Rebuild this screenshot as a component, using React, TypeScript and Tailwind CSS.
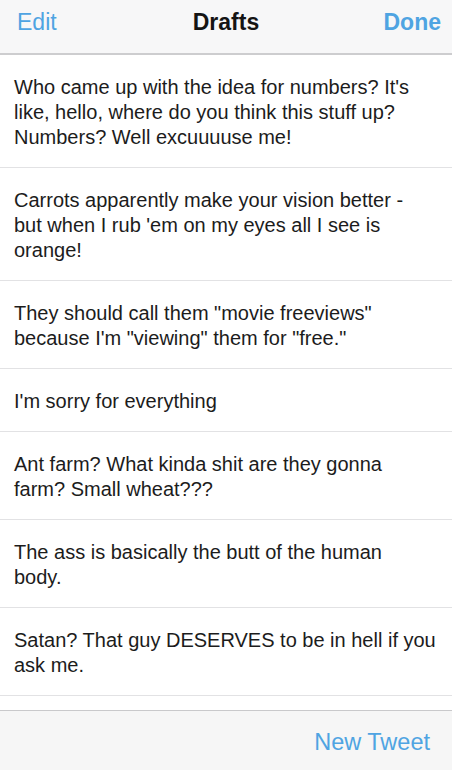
import React from "react";

const drafts: string[][] = [
  [
    "Who came up with the idea for numbers? It's",
    "like, hello, where do you think this stuff up?",
    "Numbers? Well excuuuuse me!",
  ],
  [
    "Carrots apparently make your vision better -",
    "but when I rub 'em on my eyes all I see is",
    "orange!",
  ],
  [
    'They should call them "movie freeviews"',
    'because I\'m "viewing" them for "free."',
  ],
  ["I'm sorry for everything"],
  ["Ant farm? What kinda shit are they gonna", "farm? Small wheat???"],
  ["The ass is basically the butt of the human", "body."],
  ["Satan? That guy DESERVES to be in hell if you", "ask me."],
];

export default function App() {
  return (
    <div
      className="flex h-[770px] w-[452px] flex-col overflow-hidden bg-white"
      style={{ fontFamily: '"Liberation Sans", Arial, sans-serif' }}
    >
      <header className="grid h-[55px] shrink-0 grid-cols-3 items-start border-b-2 border-[#cdcdcf] bg-[#f7f7f8] px-[14px] pt-[10px]">
        <span className="ml-[3px] text-[23px] leading-[24px] text-[#4fa4e2]">Edit</span>
        <span className="text-center text-[23px] font-bold leading-[24px] text-[#141414]">Drafts</span>
        <span className="-mr-[3px] text-right text-[23px] font-bold leading-[24px] text-[#4fa4e2]">Done</span>
      </header>
      <div className="flex-1 overflow-hidden">
        {drafts.map((lines, i) => (
          <div
            key={i}
            className="border-b border-[#e2e2e4] pb-[17px] pl-[14px] pr-[10px] pt-[20px] text-[20px] leading-[25px] text-[#1c1c1c]"
          >
            {lines.map((l, j) => (
              <div key={j} className="whitespace-nowrap">
                {l}
              </div>
            ))}
          </div>
        ))}
      </div>
      <footer className="flex h-[60px] shrink-0 items-start justify-end border-t border-[#c9c9cb] bg-[#f6f6f6] pr-[22px] pt-[19px]">
        <span className="text-[23.5px] leading-[24px] text-[#4fa4e2]">New Tweet</span>
      </footer>
    </div>
  );
}
